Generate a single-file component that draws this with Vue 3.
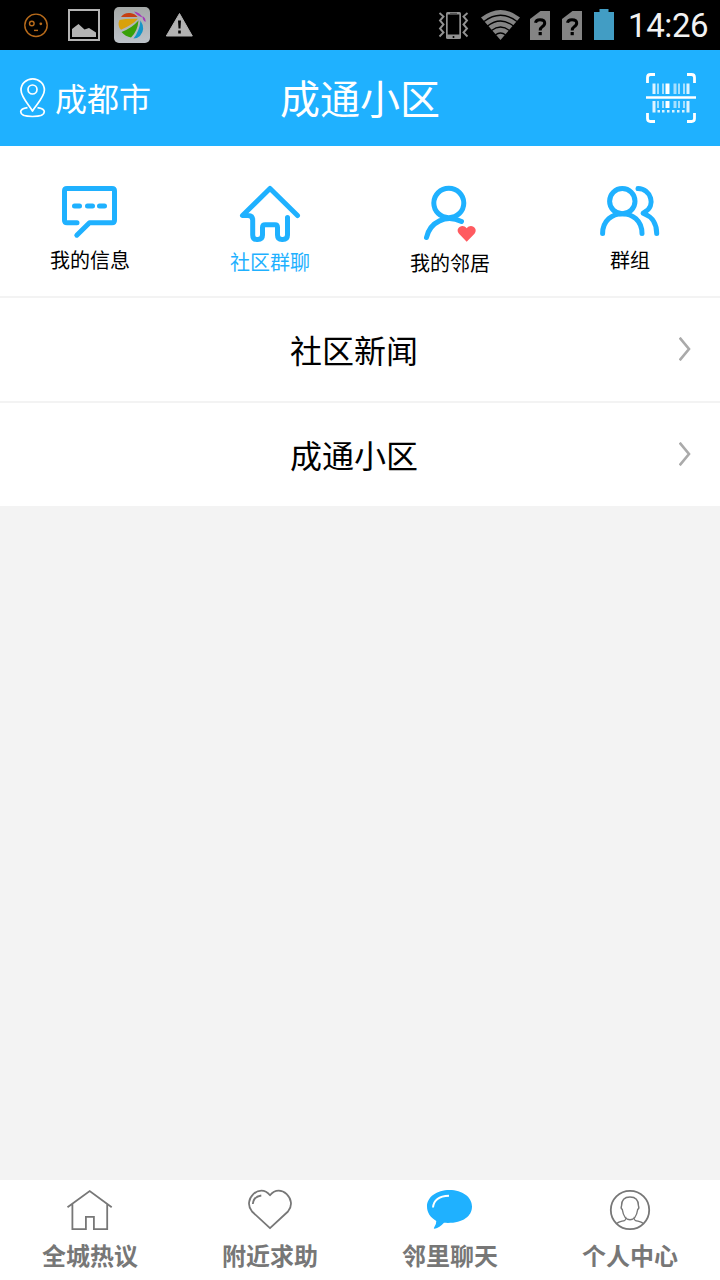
<script setup>
const blue = '#1fb1ff'
const tabs = [
  { id: 'message', label: '我的信息', x: 60, h: 52, active: false },
  { id: 'group-chat', label: '社区群聊', x: 240, h: 54, active: true },
  { id: 'neighbor', label: '我的邻居', x: 420, h: 55, active: false },
  { id: 'groups', label: '群组', x: 600, h: 52, active: false },
]
const rows = ['社区新闻', '成通小区']
const nav = [
  { id: 'home', label: '全城热议', x: 65 },
  { id: 'help', label: '附近求助', x: 245 },
  { id: 'chat', label: '邻里聊天', x: 425 },
  { id: 'me', label: '个人中心', x: 605 },
]
</script>

<template>
  <div class="screen">
    <div class="status">
      <div class="notices">
        <svg width="24" height="50" viewBox="24 0 24 50" fill="none" stroke="#b86b1b" stroke-width="1.4">
          <circle cx="36" cy="25.3" r="11.2" />
          <circle cx="31.8" cy="23.5" r="2.3" />
          <circle cx="40.8" cy="23.8" r="1.4" fill="#b86b1b" stroke="none" />
          <path d="M34 30.4h4" />
        </svg>
        <svg width="32" height="50" viewBox="68 0 32 50">
          <rect x="69" y="10" width="30" height="30" fill="none" stroke="#b4b4b4" stroke-width="2" />
          <path d="M72 37v-8l6.500-5 6 5.500 4.500-1.500 7 4.500v4.500z" fill="#b4b4b4" />
        </svg>
        <svg width="36" height="50" viewBox="114 0 36 50">
          <defs>
            <linearGradient id="tile" x1="0" y1="0" x2="0" y2="1">
              <stop offset="0" stop-color="#a5a9a8" />
              <stop offset="1" stop-color="#bcc2c9" />
            </linearGradient>
          </defs>
          <rect x="114" y="7" width="36" height="36" rx="5" fill="url(#tile)" />
          <path d="M121 17q3-4.500 9-4 5 .5 7.500 4z" fill="#c63e12" />
          <path d="M119.500 20q6-1.500 18.500-1.200-5 5.700-17 11-4-4-1.500-9.800z" fill="#d9a10b" />
          <path d="M121.500 32q10.500-4 17-11.500-1 11-7.500 17-5.500-1-9.500-5.500z" fill="#38a008" />
          <path d="M140.500 20.500q5.500 8.500-.5 15.500-3 2.500-6.500 2.500 6-7.500 7-18z" fill="#1495c8" />
          <path d="M134 11.500q6 1 8.500 6-5-1.500-8.500-6zM142.500 16q3.500 2 3 6-3-1.500-3-6z" fill="#a53bb9" />
        </svg>
        <svg width="28" height="50" viewBox="166 0 28 50">
          <path d="M179.500 13.500 192.300 36h-26z" fill="#b2b2b2" stroke="#b2b2b2" stroke-linejoin="round" />
          <path d="M178 20.500h3l-.5 8h-2zM178.200 30.500h2.600v3h-2.600z" fill="#050505" />
        </svg>
      </div>
      <div class="system">
        <svg width="31" height="50" viewBox="438 0 31 50" fill="none" stroke="#929292" stroke-width="1.900">
          <path d="M439.500 13l4 3.500-3.500 4 3.500 4-3.500 4 3.500 4-4 4M467.500 13l-4 3.500 3.500 4-3.500 4 3.500 4-3.500 4 4 4" />
          <rect x="446" y="12" width="15" height="27" rx="1.500" fill="#929292" stroke="none" />
          <rect x="447.700" y="14.500" width="11.600" height="20" fill="#000" stroke="none" />
          <path d="M450 13.300h7" stroke="#333" stroke-width=".8" />
          <circle cx="453.500" cy="37" r="1" fill="#000" stroke="none" />
        </svg>
        <svg width="39" height="50" viewBox="481 0 39 50">
          <path d="M481 17.500q19.500-15 39 0L500.500 40z" fill="#848484" />
          <g fill="none" stroke="#000" stroke-width="1.300">
            <path d="M484 21.500q16.500-12.500 33 0M487.500 26q13-10 26 0M491.500 30.500q9-7 18 0M495.500 34.800q5-3.600 10 0" />
          </g>
        </svg>
        <svg v-for="n in 2" :key="n" class="sim" width="20" height="50" viewBox="0 0 20 50">
          <path d="M10.500 11H20v29H0V19z" fill="#848484" />
          <path d="M5.500 22.700q.5-3 4.500-3 4.700 0 4.700 3.400 0 2.200-2.500 3.700-2 1.300-2 3.700" fill="none" stroke="#000" stroke-width="3" />
          <path d="M8.600 32h3.200v3.200H8.600z" />
        </svg>
        <svg width="20" height="50" viewBox="594 0 20 50">
          <path d="M599.500 9h9v3h5.500v28h-20V12h5.500z" fill="#429dc4" />
        </svg>
        <span class="time">14:26</span>
      </div>
    </div>

    <header class="header">
      <div class="city">
        <svg width="28" height="96" viewBox="19 50 28 96" fill="none" stroke="#fff" stroke-width="1.700" stroke-linejoin="round">
          <path d="M32.500 111C29 105 21 97 21 90a11.700 11.200 0 0 1 23.400 0C44.400 97 36 105 32.500 111z" />
          <circle cx="32.500" cy="89.500" r="4.500" />
          <path d="M27.500 107.700C23 108.300 20.700 110 20.700 111.800c0 3 5 4.700 11.800 4.700s11.800-1.700 11.800-4.700c0-1.800-2.300-3.500-6.800-4.100" />
        </svg>
        <span>成都市</span>
      </div>
      <h1>成通小区</h1>
      <svg class="scan" width="50" height="96" viewBox="646 50 50 96">
        <path d="M647.500 83v-5.500q0-3 3-3h4.500M687 74.500h4.500q3 0 3 3V83M647.500 113v5.500q0 3 3 3h4.500M687 121.500h4.500q3 0 3-3V113" fill="none" stroke="#fff" stroke-width="2.800" />
        <path d="M646 97.500h50" stroke="#fff" stroke-width="2.400" />
        <g fill="#fff">
          <path opacity=".85" d="M652.500 83.500h3v10.500h-3zM686.500 83.500h3v10.500h-3zM652.500 101h3v11.500h-3zM686.500 101h3v11.500h-3z" />
          <path d="M665.500 83.500h4v10.500h-4zM665.500 101h4v7h-4z" />
          <path opacity=".6" d="M657 83.500h2v10.500h-2zM662 83.500h2v10.500h-2zM673.500 83.500h3v10.500h-3zM678 83.500h2v10.500h-2zM683 83.500h2v10.500h-2zM657 101h2v7h-2zM662 101h2v7h-2zM673.500 101h3v7h-3zM678 101h2v7h-2zM683 101h2v7h-2z" />
          <path opacity=".85" d="M657.500 110h2.500v2.500h-2.500zM662 110h2.500v2.500H662zM667 110h2.500v2.500H667zM672 110h2.500v2.500H672zM677 110h2.500v2.500H677zM682 110h2.500v2.500H682z" />
        </g>
      </svg>
    </header>

    <nav class="tabs">
      <a v-for="t in tabs" :key="t.id" class="tab" :class="{ active: t.active }">
        <svg width="60" :height="t.h" :viewBox="`${t.x} 186 60 ${t.h}`" fill="none" :stroke="blue" stroke-width="5" stroke-linecap="round" stroke-linejoin="round">
          <template v-if="t.id === 'message'">
            <path d="M77 222.800H67q-2.500 0-2.500-2.500V191q0-2.500 2.500-2.500h45q2.500 0 2.500 2.500v29.300q0 2.500-2.500 2.500H89.500L76.800 235.200" />
            <path d="M74.500 206h5M87.500 206h5M99.500 206h5" />
          </template>
          <template v-else-if="t.id === 'group-chat'">
            <path d="M297.500 215.500 270 188.500 242.500 215.500H248q4.700 0 4.700 4.700V235q0 4.500 4 4.500h1q4.800 0 4.800-4.500v-7.500q0-2.800 2.800-2.800h9.700q2.500 0 2.500 2.800V235q0 4.500 4.500 4.500h.7q4.800 0 4.800-4.500v-17.500" />
          </template>
          <template v-else-if="t.id === 'neighbor'">
            <ellipse cx="448.800" cy="203" rx="15" ry="14.700" />
            <path d="M426.500 237.500C430 222 446 214 461.500 221.500" />
            <path d="M466.700 241.800 459 233.700c-4.500-5.500 3.500-11 7.700-5.500 4.200-5.500 12 0 7.800 5.500z" fill="#ff5b60" stroke="none" />
          </template>
          <template v-else>
            <ellipse cx="622.300" cy="201.200" rx="12.700" ry="12.600" />
            <path d="M602.600 233.500c0-26.500 39.400-26.500 39.400 0M638 188.500c13 .5 18.500 17.500 6.500 23.700-2 1-2 1 0 1.800 8.500 3 12.200 11 12.200 19.500" />
          </template>
        </svg>
        <span>{{ t.label }}</span>
      </a>
    </nav>

    <main class="list">
      <a v-for="r in rows" :key="r" class="row">
        <span>{{ r }}</span>
        <svg class="chevron" width="12" height="24" viewBox="0 0 12 24" fill="none" stroke="#aaa" stroke-width="2.600">
          <path d="M.7.700 10 12 .7 23.300" />
        </svg>
      </a>
    </main>

    <footer class="bottom">
      <a v-for="n in nav" :key="n.id" class="item">
        <svg width="50" height="42" :viewBox="`${n.x} 1189 50 42`" fill="none" stroke="#777" stroke-width="1.800">
          <template v-if="n.id === 'home'">
            <path d="M67.500 1207.300 89.700 1191l22 16.300M72.400 1204v25.200h13.500v-12.300h8v12.300h13.300V1204" />
          </template>
          <template v-else-if="n.id === 'help'">
            <path d="M270 1228.200 252 1211.500c-10-11.500 7.500-29.500 18-16.200 10.500-13.300 28 4.700 18 16.200z" stroke-linejoin="round" />
            <path d="M252.800 1204q.7-7.500 8.500-8.500" />
          </template>
          <template v-else-if="n.id === 'chat'">
            <path d="M449.500 1190c12.800 0 22.500 7 22.500 16.500 0 10.500-10.500 17.500-28 16.300q-4.500 5-9.300 6-1.700.2-.2-2 1.800-2.500 1.800-5.800c-6-3.500-9.300-8.500-9.300-14.500 0-9.500 9.700-16.500 22.500-16.500z" :fill="blue" stroke="none" />
            <path d="M433 1207.500q1-11.300 16-11.800" stroke="#fff" stroke-width="1.900" />
          </template>
          <template v-else>
            <circle cx="630" cy="1210" r="19.200" />
            <path stroke-width="1.400" d="M622.300 1209.500c-1.300-1-1.300-2.500-.8-3.500 0-6 3-9 8.500-9s8.500 3 8.500 9c.5 1 .5 2.500-.8 3.500-1 6.500-4 10.200-7.700 10.200s-6.700-3.700-7.700-10.200zM616.800 1223.300c2.500-1.700 5.500-2 8-3q1.500-.8 1-3.300M643.200 1223.300c-2.500-1.700-5.500-2-8-3q-1.500-.8-1-3.300" />
          </template>
        </svg>
        <span>{{ n.label }}</span>
      </a>
    </footer>
  </div>
</template>

<style>
body {
  margin: 0;
}
</style>

<style scoped>
.screen {
  width: 720px;
  height: 1280px;
  display: flex;
  flex-direction: column;
  overflow: hidden;
  background: #f3f3f3;
  color: #000;
  font-family: "Noto Sans CJK SC", sans-serif;
}
svg {
  display: block;
  flex: none;
}
.status {
  height: 50px;
  flex: none;
  display: flex;
  justify-content: space-between;
  background: #000;
}
.notices {
  display: flex;
  padding-left: 24px;
}
.notices svg:nth-child(2) {
  margin-left: 20px;
}
.notices svg:nth-child(3) {
  margin-left: 14px;
}
.notices svg:nth-child(4) {
  margin-left: 16px;
}
.system {
  display: flex;
  gap: 12px;
  width: 282px;
}
.system .sim:nth-of-type(3) {
  margin-left: -2px;
}
.time {
  margin-left: 2px;
  color: #f2f2f2;
  font: 33px/51px Roboto, sans-serif;
  letter-spacing: -0.4px;
}
.header {
  height: 96px;
  flex: none;
  display: grid;
  grid-template-columns: 1fr auto 1fr;
  align-items: center;
  background: #1fb1ff;
  color: #fff;
}
.city {
  display: flex;
  align-items: center;
  gap: 8px;
  padding-left: 19px;
  font-size: 32px;
}
.city span {
  padding-bottom: 2px;
}
h1 {
  margin: 0;
  padding-bottom: 2px;
  font-size: 40px;
  font-weight: 400;
}
.scan {
  justify-self: end;
  margin-right: 24px;
}
.tabs {
  height: 110px;
  flex: none;
  display: grid;
  grid-template-columns: repeat(4, 1fr);
  padding-top: 40px;
  background: #fff;
  border-bottom: 2px solid #f3f3f3;
}
.tab {
  display: flex;
  flex-direction: column;
  align-items: center;
  gap: 7px;
  font-size: 20px;
  line-height: 30px;
}
.tab svg {
  overflow: visible;
}
.active {
  color: #1fb1ff;
}
.list {
  flex: 1;
}
.row {
  height: 103px;
  display: flex;
  align-items: center;
  background: #fff;
  font-size: 32px;
}
.row + .row {
  border-top: 2px solid #f3f3f3;
}
.row span {
  flex: 1;
  padding: 0 0 2px 29px;
  text-align: center;
}
.chevron {
  margin: 0 29px 2px 0;
}
.bottom {
  height: 100px;
  flex: none;
  display: grid;
  grid-template-columns: repeat(4, 1fr);
  background: #fff;
}
.item {
  display: flex;
  flex-direction: column;
  align-items: center;
  padding-top: 9px;
  gap: 6px;
  color: #777;
  font-size: 24px;
  font-weight: 700;
  line-height: 36px;
}
</style>
